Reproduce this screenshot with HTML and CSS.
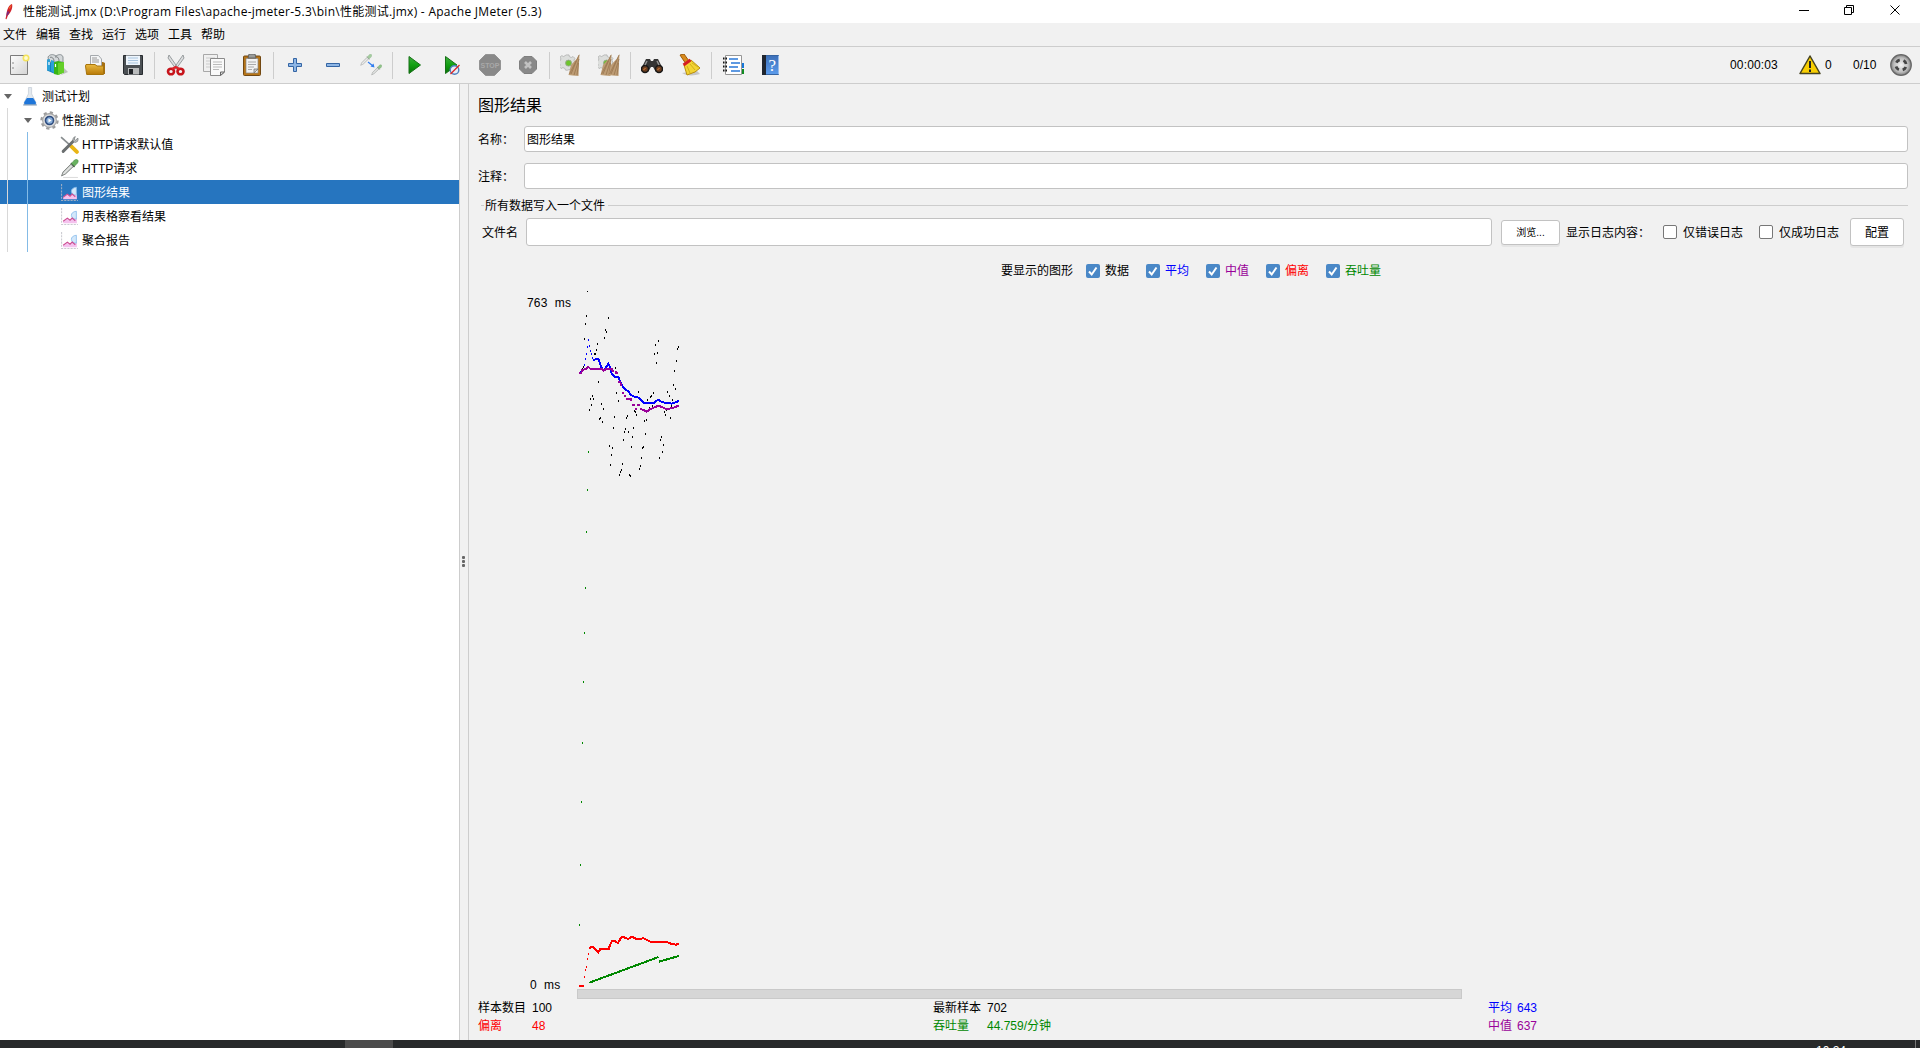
FILE: index.html
```html
<!DOCTYPE html>
<html lang="zh-CN">
<head>
<meta charset="utf-8">
<title>性能测试.jmx - Apache JMeter (5.3)</title>
<link rel="stylesheet" href="styles.css">
</head>
<body>
<svg width="0" height="0" class="defs">
  <defs>
    <linearGradient id="green" x1="0" y1="0" x2="0" y2="1"><stop offset="0" stop-color="#3fae3f"/><stop offset=".5" stop-color="#12a012"/><stop offset="1" stop-color="#087008"/></linearGradient>
    <linearGradient id="gold" x1="0" y1="0" x2="0" y2="1"><stop offset="0" stop-color="#eab940"/><stop offset="1" stop-color="#b87a08"/></linearGradient>
    <linearGradient id="paper" x1="0" y1="0" x2="1" y2="1"><stop offset="0" stop-color="#fdfdfd"/><stop offset="1" stop-color="#d4d4d4"/></linearGradient>
    <linearGradient id="book" x1="0" y1="0" x2="0" y2="1"><stop offset="0" stop-color="#3c6fb8"/><stop offset="1" stop-color="#5c9cec"/></linearGradient>
    <radialGradient id="knob"><stop offset="0" stop-color="#f2f2f2"/><stop offset=".7" stop-color="#bcbcbc"/><stop offset="1" stop-color="#7c7c7c"/></radialGradient>
    <symbol id="gearbroom" viewBox="0 0 22 22">
      <path d="M8 1h3l.5 2 2 .8 2-1 2 2-1 2 .8 2v3l-2 .6-1 2.400-2 2-3 1h-2l-1-2-2-.8-2 1-2-2 1-2-1-2-1-.6V8l2-.6.8-2-1-2 2-1.600 2 1z" fill="#dcdedc" stroke="#a9aba9" stroke-width=".8"/>
      <circle cx="10.500" cy="10" r="3.300" fill="#6cc52a" stroke="#96a58c"/>
    </symbol>
    <symbol id="bristle" viewBox="0 0 12 22">
      <path d="M11.500 0 8.500 5 3 11 .5 21l4 .5 6 .5.500-13z" fill="#bd9c74"/><path d="M11 1 3 20M11 5 6 21M10.500 9 9 21M8 7 1.500 20" fill="none" stroke="#937049" stroke-width=".7"/>
    </symbol>
    <symbol id="graph" viewBox="0 0 18 18">
      <path d="M1.500 1v15.500H17" fill="none" stroke="#bdbdc6" stroke-opacity=".8" stroke-dasharray="2 1"/>
      <path d="M3 15.500v-2l3.500-3 3 2 2-3 2 1.500 2.500-1v5.500z" fill="#f4c2ee"/>
      <path d="M15.500 4c-3 .3-5 2-4.700 4.200.3 2 2.200 3.300 4.700 3.300z" fill="#d3e8fb" stroke="#8abcec" stroke-width=".8"/>
      <path d="m3 13.500 4-3 2.500 2 2-2 3 2.500" fill="none" stroke="#cc4f92" stroke-width="1"/>
    </symbol>
    <symbol id="pipette" viewBox="0 0 18 18">
      <path d="m11.500 4 2.500 2.500-9 8.500-4 2 1.500-4z" fill="#c7cbc8" stroke="#6f7471" stroke-width=".8"/><path d="m3 15 8-8" stroke="#f5f5f5"/>
      <path d="m10.500 4 3.500 4" stroke="#4c5a4d" stroke-width="1.500"/><path d="m11 4.500 3-3.500c1.500-1 3.700-.5 3.700 1s-1 3-3.700 5z" fill="#68b25f" stroke="#4f8c49" stroke-width=".6"/>
    </symbol>
  </defs>
</svg>
<div class="window">
  <header class="titlebar">
    <svg class="feather" viewBox="0 0 10 18"><path d="M8 1C5 2 3 6 2.500 11L1.500 16l1 .2 1.500-4C7.500 9 9 4 8 1z" fill="#d2222c"/><path d="M3.500 8c-1 2-1 3.500-1 5l1.500-1 1.500-3z" fill="#7b2a7d"/><path d="M8 1 6 6 4.500 5z" fill="#ee6a28"/></svg>
    <span class="title">性能测试.jmx (D:\Program Files\apache-jmeter-5.3\bin\性能测试.jmx) - Apache JMeter (5.3)</span>
    <svg class="winctl" viewBox="0 0 110 23" fill="none" stroke="#000"><path d="M4 10.500h10M49.500 7.500h7v7h-7zM51.500 7.500v-2h7v7h-2M95.500 5.500l9 9M104.500 5.500l-9 9"/></svg>
  </header>
  <nav class="menubar"><span>文件</span><span>编辑</span><span>查找</span><span>运行</span><span>选项</span><span>工具</span><span>帮助</span></nav>
  <div class="toolbar">
    <b class="tool"><svg viewBox="0 0 22 22"><path d="M2.500 1.500h17v19h-17z" fill="url(#paper)" stroke="#7c7c7c"/><path d="M5 8v2M5 13v2" stroke="#888"/><circle cx="18" cy="4" r="2.700" fill="#fffbd0" stroke="#f4e35c" stroke-width="1.600"/></svg></b>
    <b class="tool"><svg viewBox="0 0 22 22"><path d="M1 5.500 9 5v15l-8-3.500z" fill="#1681bd"/><path d="M2 3c2-3 5-3 8-1 3-2 6-2 7 1v5H3z" fill="#d4d8da" stroke="#8b9295"/><path d="M4 3.500c2-1 4 1 4 4M9 3c3-1 4 2 4 4" fill="none" stroke="#75797b"/><path d="M1 6l3-1v12l-3-1zM5 6l3 1v12l-3-2z" fill="#2ba0d8"/><path d="M8 8.500 12 7l6 1.500v10L12 21l-4-1z" fill="#39b515"/><path d="m12 9 6-1v10.500L12 21z" fill="#64cf28"/><path d="M3 8v3M9.500 10v3" stroke="#fff" stroke-width="1.200"/><path d="m18 14 4 4-8 3.500 4-3z" fill="#9aa39a" opacity=".6"/></svg></b>
    <b class="tool"><svg viewBox="0 0 22 22"><path d="M11 8h8l2 1v11h-9z" fill="#a56f12"/><path d="M6.500 1.500h8l3 3.500v8h-11z" fill="#f5f6f7" stroke="#a5a9ad"/><path d="M8 4h5M8 6h7M8 8h7" stroke="#999"/><path d="M2 10.500h9l2 1.500h6.500v8.500H2.700L1.500 12z" fill="url(#gold)" stroke="#a8750c"/></svg></b>
    <b class="tool"><svg viewBox="0 0 22 22"><path d="M1.500 1.500h19v19h-18l-1-1z" fill="#4b5054" stroke="#282c30"/><path d="M4 1.500h14V11H4z" fill="#eef5fc"/><path d="M6 4h10M6 6.500h10M6 9h10" stroke="#a9c5df"/><path d="M6 14h11v6.500H6z" fill="#b9bbbc"/><path d="M7 15h4v5H7z" fill="#202327"/></svg></b>
    <i class="sep"></i>
    <b class="tool"><svg viewBox="0 0 22 22"><path d="m4 1 9 13-2 1L3 4zM18 1 9 14l2 1 8-11z" fill="#dcdedf" stroke="#858a8d" stroke-width=".8"/><g fill="none" stroke="#c7141b" stroke-width="2.600"><ellipse cx="6" cy="17.500" rx="3" ry="2.800"/><ellipse cx="15.500" cy="17.500" rx="3" ry="2.800"/></g><path d="m7 15 3.700-2L14.500 15" fill="none" stroke="#df2229" stroke-width="2"/></svg></b>
    <b class="tool"><svg viewBox="0 0 22 22"><path d="M.5.5h14v17H.5z" fill="#f0f0f0" stroke="#a8a8a8"/><path d="M3 4h9M3 7h4M3 10h4M3 13h4" stroke="#ccc"/><path d="M7.500 4.500h14V18l-4 3.500h-10z" fill="#fafafa" stroke="#8a8a8a"/><path d="M10 8h9M10 10.500h9M10 13h9M10 15.500h6" stroke="#bbb"/><path d="M17.500 21.500V18h4z" fill="#ddd" stroke="#666"/></svg></b>
    <b class="tool"><svg viewBox="0 0 22 22"><rect x="2.500" y="2" width="17" height="19.500" rx="1" fill="#b87516" stroke="#724812"/><path d="M5 4.500h12V19H5z" fill="#f2f2f2" stroke="#888" stroke-width=".7"/><path d="M8 0h6l1 4H7z" fill="#9a9c9a" stroke="#555" stroke-width=".8"/><path d="M7 8h8M7 10.500h8M7 13h6M7 15.500h4" stroke="#aaa"/><path d="M13 19v-4h4z" fill="#ccc" stroke="#777" stroke-width=".8"/></svg></b>
    <i class="sep"></i>
    <b class="tool"><svg viewBox="0 0 22 22"><path d="M9.500 4.500h3v5h5v3h-5v5h-3v-5h-5v-3h5z" fill="#8eb6e5" stroke="#3465a4"/></svg></b>
    <b class="tool"><svg viewBox="0 0 22 22"><path d="M4.500 9.500h13v3h-13z" fill="#8eb6e5" stroke="#3465a4"/></svg></b>
    <b class="tool"><svg viewBox="0 0 22 22"><g opacity=".7"><use href="#pipette" x="0" y="0" width="12" height="12" opacity=".8"/><use href="#pipette" x="11" y="10" width="11" height="12"/></g><path d="m8 8 5 4" stroke="#2e7cf0" stroke-width="1.200"/><path d="m14.500 13.500-4-1 3-3z" fill="#2e7cf0"/></svg></b>
    <i class="sep"></i>
    <b class="tool"><svg viewBox="0 0 22 22"><path d="M6 2.500 17.500 11 6 19.500z" fill="url(#green)" stroke="#167116"/></svg></b>
    <b class="tool"><svg viewBox="0 0 22 22"><path d="M4.500 2.500 16 11 4.500 19.500z" fill="url(#green)" stroke="#167116"/><circle cx="13.500" cy="16" r="4.300" fill="#e4edf8" stroke="#4e7fbe" stroke-width="1.400"/><path d="m9.500 20 9-9" stroke="#dd2222" stroke-width="1.300"/></svg></b>
    <b class="tool"><svg viewBox="0 0 22 22"><path d="M6.500.5h9l6 6v9l-6 6h-9l-6-6v-9z" fill="#898989" stroke="#949494"/><text x="11" y="14" class="stop-text">STOP</text></svg></b>
    <b class="tool"><svg viewBox="0 0 22 22"><path d="M7 2.500h8l4.500 4.500v8L15 19.500H7L2.500 15V7z" fill="#898989" stroke="#7f7f7f"/><path d="m8 8 6 6m0-6-6 6" stroke="#c2c2c2" stroke-width="2.600"/></svg></b>
    <i class="sep"></i>
    <b class="tool"><svg viewBox="0 0 22 22"><use href="#gearbroom" x="-1" y="0" width="20" height="20"/><use href="#bristle" x="8" y="0" width="12" height="22"/></svg></b>
    <b class="tool"><svg viewBox="0 0 22 22"><use href="#gearbroom" x="-1" y="0" width="20" height="20"/><use href="#bristle" x="2" y="0" width="12" height="22"/><use href="#bristle" x="10" y="0" width="12" height="22"/></svg></b>
    <i class="sep"></i>
    <b class="tool"><svg viewBox="0 0 22 22"><path d="M5 5h4l1 2h2l1-2h4l5 10-3 3h-4l-3-5h-2l-3 5H3l-3-3z" fill="#343434"/><circle cx="4" cy="15" r="3.500" fill="#6d3f20" stroke="#171717" stroke-width="1.500"/><circle cx="18" cy="15" r="3.500" fill="#6d3f20" stroke="#171717" stroke-width="1.500"/><path d="m6 7-2 4M16 7l2 4" stroke="#929292" stroke-width="1.500"/><path d="m2.500 16 2-2M16.500 16l2-2" stroke="#e0843c"/></svg></b>
    <b class="tool"><svg viewBox="0 0 22 22"><path d="M3 19c4 3 12 3 18 1l-3-3z" fill="#aaa" opacity=".6"/><path d="m1 1 4-1 5 7-3 3z" fill="#d98b1d" stroke="#9c5a0b"/><path d="m5 11 7-5 9 8-5 4-8 3z" fill="#f3d433" stroke="#b98f0e"/><path d="m4.500 11 7-5" stroke="#d51e22" stroke-width="3"/><path d="m8 12 3 7M11 10l5 6M13 9l6 4" stroke="#c9a615" stroke-width=".8"/></svg></b>
    <i class="sep"></i>
    <b class="tool"><svg viewBox="0 0 22 22"><path d="M17 9h5v5h-5z" fill="#1677d9"/><path d="M17 15h5v5h-5z" fill="#108b21"/><path d="M3.500 1.500h16v19h-16z" fill="#fff" stroke="#969696"/><path d="M7 5h9M9 9h9M7 13h9M9 17h9" stroke="#2a78d7" stroke-width="1.300"/><path d="M1 4.500h4M1 8.500h4M1 12.500h4M1 16.500h4" stroke="#151515" stroke-width="2" stroke-dasharray="1.500 1"/></svg></b>
    <b class="tool"><svg viewBox="0 0 22 22"><path d="M2.500 1.500h16v19h-16z" fill="url(#book)" stroke="#3564a2"/><path d="M2 1h4v20H2z" fill="#20262f"/><path d="M18.500 2v18" stroke="#98bceb"/><text x="12.300" y="17" class="help-text">?</text></svg></b>
    <div class="status">
      <span class="time">00:00:03</span>
      <svg class="warn" viewBox="0 0 22 20"><path d="M11 1 21 18.500H1z" fill="#f8ce02" stroke="#45421f" stroke-width="1.500" stroke-linejoin="round"/><path d="M11 6v7M11 14.500V17" stroke="#222" stroke-width="2"/></svg>
      <span class="errors">0</span><span class="threads">0/10</span>
      <svg class="knob" viewBox="0 0 22 22"><circle cx="11" cy="11" r="10.300" fill="url(#knob)" stroke="#666" stroke-width="1.200"/><circle cx="11" cy="11" r="5.200" fill="none" stroke="#454545" stroke-width="2.800" stroke-dasharray="4.200 3.970" stroke-dashoffset="-2"/></svg>
    </div>
  </div>
  <main class="body">
    <aside class="tree">
      <div class="row"><i class="arrow"></i><svg class="ico" viewBox="0 0 18 18"><path d="M8 .5h3v6l4 8v2H4v-2l4-8z" fill="#e3e9ef" stroke="#c5cdd6" stroke-width=".7"/><path d="m6.500 10.500-2.500 4v2h11v-2l-2.500-4z" fill="#1e76da"/><path d="M3 17h13" stroke="#7894b0"/></svg><span>测试计划</span></div>
      <div class="row lv1"><i class="arrow"></i><svg class="ico" viewBox="0 0 18 18"><circle cx="9" cy="9" r="7.600" fill="none" stroke="#9c9c9c" stroke-width="2.200" stroke-dasharray="3 2.970"/><circle cx="9" cy="9" r="6.500" fill="#dcdcdc" stroke="#a4a4a4"/><circle cx="9" cy="9" r="3.800" fill="#88aed9" stroke="#304e80" stroke-width="1.500"/><path d="m8 7 3 2-3 2z" fill="#fff"/></svg><span>性能测试</span></div>
      <div class="row lv2"><svg class="ico" viewBox="0 0 18 18"><path d="M1 2 10 10" stroke="#888d8f" stroke-width="1.600"/><path d="m10 10 6 6" stroke="#e9b515" stroke-width="3.600" stroke-linecap="round"/><path d="m3 15.500 10-10" stroke="#6b6f70" stroke-width="2.800" stroke-linecap="round"/><path d="M14.500 1.500c-3 1-3 5 0 5.500 2 0 3-2 2.500-4l-2.500 2-1-1z" fill="#b9bdbf" stroke="#767a7c" stroke-width=".7"/></svg><span>HTTP请求默认值</span></div>
      <div class="row lv2"><svg class="ico" viewBox="0 0 18 18"><path d="M3 17.500h14" stroke="#ddd"/><use href="#pipette" width="18" height="17"/></svg><span>HTTP请求</span></div>
      <div class="row lv2 selected"><svg class="ico" viewBox="0 0 18 18"><use href="#graph" width="18" height="18"/></svg><span>图形结果</span></div>
      <div class="row lv2"><svg class="ico" viewBox="0 0 18 18"><use href="#graph" width="18" height="18"/></svg><span>用表格察看结果</span></div>
      <div class="row lv2"><svg class="ico" viewBox="0 0 18 18"><use href="#graph" width="18" height="18"/></svg><span>聚合报告</span></div>
      <i class="guide outer"></i><i class="guide inner"></i>
    </aside>
    <div class="splitter"><i></i><i></i><i></i></div>
    <section class="panel">
      <h1>图形结果</h1>
      <div class="field"><label>名称：</label><div class="input">图形结果</div></div>
      <div class="field"><label>注释：</label><div class="input"></div></div>
      <div class="legend"><span>所有数据写入一个文件</span></div>
      <div class="file"><label>文件名</label><div class="input"></div><span class="btn browse">浏览...</span><span class="loglabel">显示日志内容：</span><i class="box"></i><span class="opt">仅错误日志</span><i class="box"></i><span class="opt">仅成功日志</span><span class="btn config">配置</span></div>
      <div class="series">
        <span class="lead">要显示的图形</span>
        <span class="check"><svg viewBox="0 0 14 14"><path d="m3 7.500 2.700 3L10.500 3.500"/></svg>数据</span>
        <span class="check blue"><svg viewBox="0 0 14 14"><path d="m3 7.500 2.700 3L10.500 3.500"/></svg>平均</span>
        <span class="check purple"><svg viewBox="0 0 14 14"><path d="m3 7.500 2.700 3L10.500 3.500"/></svg>中值</span>
        <span class="check red"><svg viewBox="0 0 14 14"><path d="m3 7.500 2.700 3L10.500 3.500"/></svg>偏离</span>
        <span class="check green"><svg viewBox="0 0 14 14"><path d="m3 7.500 2.700 3L10.500 3.500"/></svg>吞吐量</span>
      </div>
      <div class="chart">
        <div class="axis"><span>763&nbsp; ms</span><span>0&nbsp; ms</span></div>
        <div class="plot">
          <svg viewBox="0 0 885 709" fill="none" shape-rendering="crispEdges">
            <g transform="translate(-17 0) scale(.33333)">
              <path class="dots" stroke="#000" d="M79 105v5M76 129v5M73 174v5M145 111v5M136 147v5M139 153v5M133 171v5M112 189v5M109 207v5M106 219v5M103 219v5M295 180v5M286 192v5M292 216v5M283 220v5M289 246v5M355 198v5M352 204v5M349 240v5M343 270v5M340 312v5M346 324v5M115 303v5M97 345v5M91 354v5M100 354v5M94 372v5M88 387v5M124 369v5M130 384v5M121 411v5M118 414v5M127 423v5M166 261v5M67 264v5M70 258v5M235 333v5M169 336v5M280 336v5M274 345v5M271 349v5M262 357v5M322 333v5M328 345v5M337 357v5M175 360v5M163 408v5M202 405v5M199 411v5M160 441v5M196 444v5M193 453v5M205 453v5M190 477v5M217 468v5M220 441v5M214 498v5M148 495v5M157 501v5M154 522v5M151 552v5M187 549v5M184 567v5M181 573v5M178 582v5M208 582v5M211 585v5M241 555v5M238 564v5M244 531v5M247 501v5M250 498v5M256 459v5M253 420v5M259 417v5M304 468v5M301 477v5M310 492v5M307 513v5M298 531v5M331 411v5M316 402v5M313 394v5M226 393v5M223 390v5M229 402v5M265 387v5M268 381v5M277 375v5M319 389v5M334 375v5M82 33v3"/>
              <path class="dots" stroke="#00f" d="M61 273v6M64 270v6M67 267v6M70 267v6M73 252v6M76 234v6M79 219v6M82 198v6M85 177v6M88 195v6M91 210v6M94 219v6M97 231v6"/>
              <path class="line" stroke="#00f" d="M100 242l9-6h6l3 9 3 9 3 9 6 7 6-5 3-5 3-3 3-6 3 6 3 9 3 12 6 9 3 3h12l6 17 9 15 6 7 9 5 6 9 9 6 15 4 9 8 9 9h27l9-7 6-4 9 6 15 5 6-2 9 3 12-4 6-2 4-4"/>
              <path class="line" stroke="#909" d="M58 278h6l3-8 12-3 6-6 7 6h35l3 5 10-6h15l3 6h4M167 274v6h6M175 305h6l2 11h4M187 338h6M193 347h5M199 356h14v8M216 374h9M230 375h9M229 385v5M241 386l9 4 10 5 8-6 9-4 18-8 15 6 10 5 11-3 12-3 14-5"/>
              <path class="dots" stroke="#080" d="M85 513v6M82 627v6M79 754v6M76 921v6M73 1055v6M70 1204v6M67 1385v6M64 1564v6M61 1751v6M58 1932v6"/>
              <path class="dots" stroke="red" d="M73 2088v6M76 2067v6M79 2058v6M82 2034v6M85 2019v6"/>
              <path class="line" stroke="red" d="M58 2119h14M88 2007l4-5h8l7 6 8 8 6-9h25l4-12 6-12h7l11 6 10-17h8l13 5 7-5h7l13 6 18-3 10 4 12 7h48l15 6 13 2 8-3"/>
              <path class="line" stroke="#080" d="M88 2108l208-77M297 2045l59-17"/>
            </g>
          </svg>
          <div class="scroll"></div>
        </div>
      </div>
      <div class="stats">
        <span>样本数目</span><span>100</span><span>最新样本</span><span>702</span><span class="blue">平均</span><span class="blue">643</span>
        <span class="red">偏离</span><span class="red">48</span><span class="green">吞吐量</span><span class="green">44.759/分钟</span><span class="purple">中值</span><span class="purple">637</span>
      </div>
    </section>
  </main>
  <footer class="taskbar"><span>10:24</span><i></i></footer>
</div>
</body>
</html>
```
FILE: styles.css
```css
* { box-sizing: border-box; }
body { margin: 0; background: #f1f1f1; color: #000; font: 12px/16px "Liberation Sans", "Noto Sans CJK SC", sans-serif; overflow: hidden; }
.defs { position: absolute; }
.window { width: 1920px; height: 1048px; display: flex; flex-direction: column; }
span, label { white-space: nowrap; }

.titlebar { height: 23px; flex: none; background: #fff; display: flex; align-items: center; }
.feather { width: 10px; height: 18px; margin-left: 4px; }
.title { margin-left: 9px; font-family: "Open Sans", "Noto Sans CJK SC", sans-serif; letter-spacing: .27px; }
.winctl { width: 110px; height: 23px; margin-left: auto; margin-right: 15px; }

.menubar { height: 23px; flex: none; display: flex; gap: 9px; align-items: center; padding-left: 3px; }

.toolbar { height: 38px; flex: none; display: flex; align-items: center; border: solid #cdcdcd; border-width: 1px 0; }
.tool { width: 38px; display: flex; justify-content: center; }
.tool svg { width: 22px; height: 22px; }
.sep { width: 5px; height: 27px; background: linear-gradient(#cdcdcd, #cdcdcd) 2px 0 / 1px 100% no-repeat; }
.stop-text { font: bold 7px "Liberation Sans", sans-serif; fill: #a8a8a8; text-anchor: middle; }
.help-text { font: 17px "Liberation Serif", serif; fill: #fff; text-anchor: middle; }
.status { margin-left: auto; display: flex; align-items: center; padding-right: 8px; }
.time { width: 69px; letter-spacing: .15px; }
.warn { width: 22px; height: 20px; }
.errors { width: 28px; margin-left: 4px; }
.threads { width: 37px; }
.knob { width: 22px; height: 22px; }

.body { flex: 1; min-height: 0; display: flex; }
.tree { position: relative; width: 459px; background: #fff; }
.row { height: 24px; display: flex; align-items: center; padding-left: 4px; }
.row span { padding-top: 2px; }
.row.lv1 { padding-left: 24px; }
.row.lv2 { padding-left: 60px; }
.arrow { border: 4.500px solid transparent; border-top: 5px solid #666; border-bottom: 0; margin-right: 7px; }
.ico { width: 19px; height: 19px; margin: 1px 3px 0 0; }
.arrow + .ico { margin-left: 1px; }
.selected { background: #2675bf; color: #fff; }
.guide { position: absolute; width: 1px; }
.outer { left: 7px; top: 24px; height: 144px; background: #d8d8d8; }
.inner { left: 27px; top: 48px; height: 120px; background: #84bbe6; }
.splitter { width: 10px; border: solid #cdcdcd; border-width: 0 1px; display: flex; flex-direction: column; align-items: center; justify-content: center; gap: 1px; padding: 0 1px 2px 0; }
.splitter i { width: 3px; height: 3px; border-radius: 1px; background: #666; }

.panel { flex: 1; padding: 0 12px 0 9px; }
h1 { margin: 0; padding-top: 1px; font-size: 16px; font-weight: normal; line-height: 41px; }
.field { display: flex; align-items: center; height: 26px; margin: 0 0 11px 1px; }
.field label { width: 45px; margin-left: -1px; margin-right: 1px; padding-top: 2px; }
.input { flex: 1; height: 100%; background: #fff; border: 1px solid #c2c2c2; border-radius: 3px; padding: 5px 2px 3px; }
.legend { height: 16px; display: flex; align-items: center; gap: 3px; margin: -3px 0 5px 3px; }
.legend::before { content: ""; width: 3px; height: 1px; background: #cdcdcd; }
.legend::after { content: ""; flex: 1; height: 1px; background: #cdcdcd; }
.legend span { margin-left: -2px; padding-top: 2px; }
.file { height: 28px; display: flex; align-items: center; padding: 0 4px 0 4px; }
.file > span, .file label { padding-top: 2px; }
.file label { width: 44px; }
.btn { display: flex; align-items: center; justify-content: center; background: #fff; border: 1px solid #c2c2c2; border-radius: 3px; box-shadow: 0 2px 0 #e5e5e5; }
.browse { width: 59px; height: 25px; margin: 0 6px 0 9px; font-size: 10px; }
.config { width: 54px; height: 28px; margin-left: 11px; }
.loglabel { width: 97px; }
.box { width: 14px; height: 14px; border: 1px solid #777; border-radius: 2px; background: #fff; }
.opt { width: 60px; margin: 0 0 0 6px; }
.opt + .box { margin-left: 16px; }
.series { height: 15px; margin: 17px 0 2px 523px; display: flex; align-items: center; }
.lead { width: 85px; }
.check { width: 60px; display: flex; align-items: center; gap: 5px; }
.check svg { width: 14px; height: 14px; background: #4a88c7; border-radius: 2px; fill: none; stroke: #fff; stroke-width: 2; }
.blue { color: #00f; }
.purple { color: #909; }
.red { color: #f00; }
.green { color: #080; }

.chart { height: 719px; display: flex; padding-left: 1px; }
.axis { width: 98px; display: flex; flex-direction: column; justify-content: space-between; padding: 15px 0 6px 48px; letter-spacing: .2px; }
.axis span:last-child { padding-left: 3px; }
.plot { width: 885px; }
.plot svg { display: block; width: 885px; height: 709px; }
.dots { stroke-width: 3; }
.line { stroke-width: 6; }
.scroll { height: 10px; background: #d6d6d6; border: 1px solid #c9c9c9; }
.stats { display: grid; grid-template-columns: 54px 401px 54px 501px 29px auto; grid-auto-rows: 18px; line-height: 19px; }

.taskbar { height: 8px; flex: none; display: flex; justify-content: flex-end; overflow: hidden; color: #fff; background: linear-gradient(90deg, transparent 345px, #4b4b4b 345px 393px, transparent 393px), #27292a; }
.taskbar span { margin: 3px 69px 0 0; }
.taskbar i { width: 1px; background: #777; margin-right: 4px; }
```
